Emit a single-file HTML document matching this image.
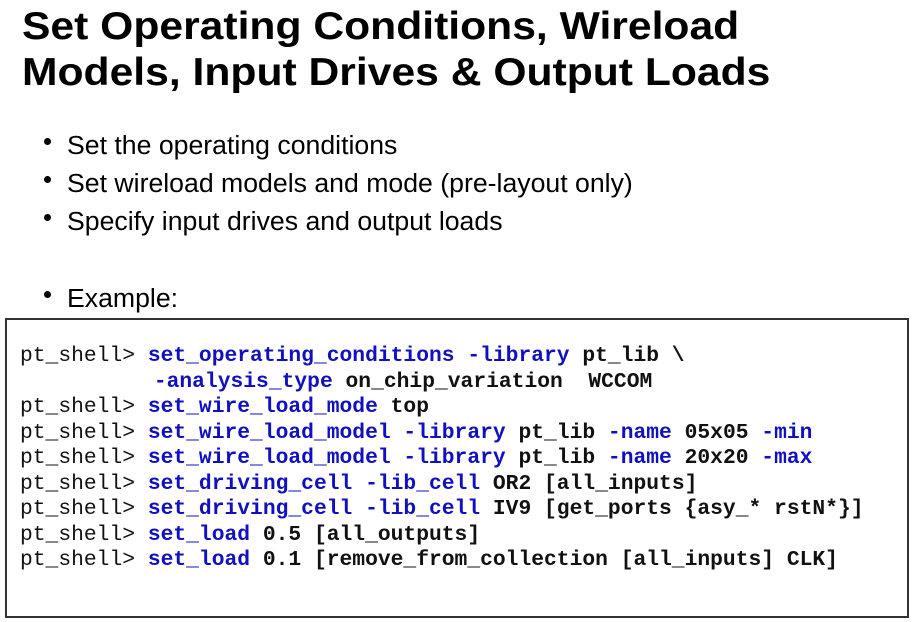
<!DOCTYPE html>
<html><head><meta charset="utf-8"><style>
body{margin:0;width:923px;height:622px;background:#fff;position:relative;overflow:hidden;font-family:"Liberation Sans",Arial,sans-serif;color:#000}
.t{position:absolute;left:22px;font-size:39px;font-weight:bold;line-height:44px;white-space:nowrap;transform:scaleX(1.093);transform-origin:0 0}
.b{position:absolute;left:67px;font-size:25.5px;line-height:28px;white-space:nowrap;transform:scaleX(1.045);transform-origin:0 0}
.d{position:absolute;left:44px;width:7px;height:7px;border-radius:50%;background:#000}
.box{position:absolute;left:5px;top:318px;width:900px;height:296px;border:2px solid #333}
pre{position:absolute;left:20px;top:344px;margin:0;font-family:"Liberation Mono",monospace;font-size:21.3px;line-height:25.5px;color:#111}
.k{color:#1010c0;font-weight:bold}.v{font-weight:bold}
</style></head><body>
<div class="t" style="top:5px">Set Operating Conditions, Wireload</div>
<div class="t" style="top:51px">Models, Input Drives &amp; Output Loads</div>
<div class="d" style="top:138px"></div><div class="b" style="top:132px">Set the operating conditions</div>
<div class="d" style="top:176px"></div><div class="b" style="top:170px">Set wireload models and mode (pre-layout only)</div>
<div class="d" style="top:214px"></div><div class="b" style="top:208px">Specify input drives and output loads</div>
<div class="d" style="top:291px"></div><div class="b" style="top:285px">Example:</div>
<div class="box"></div>
<pre>pt_shell&gt; <span class="k">set_operating_conditions -library</span> <span class="v">pt_lib \</span>
          <span class="k" style="margin-left:6px">-analysis_type</span> <span class="v">on_chip_variation  WCCOM</span>
pt_shell&gt; <span class="k">set_wire_load_mode</span> <span class="v">top</span>
pt_shell&gt; <span class="k">set_wire_load_model -library</span> <span class="v">pt_lib</span> <span class="k">-name</span> <span class="v">05x05</span> <span class="k">-min</span>
pt_shell&gt; <span class="k">set_wire_load_model -library</span> <span class="v">pt_lib</span> <span class="k">-name</span> <span class="v">20x20</span> <span class="k">-max</span>
pt_shell&gt; <span class="k">set_driving_cell -lib_cell</span> <span class="v">OR2 [all_inputs]</span>
pt_shell&gt; <span class="k">set_driving_cell -lib_cell</span> <span class="v">IV9 [get_ports {asy_* rstN*}]</span>
pt_shell&gt; <span class="k">set_load</span> <span class="v">0.5 [all_outputs]</span>
pt_shell&gt; <span class="k">set_load</span> <span class="v">0.1 [remove_from_collection [all_inputs] CLK]</span></pre>
</body></html>
